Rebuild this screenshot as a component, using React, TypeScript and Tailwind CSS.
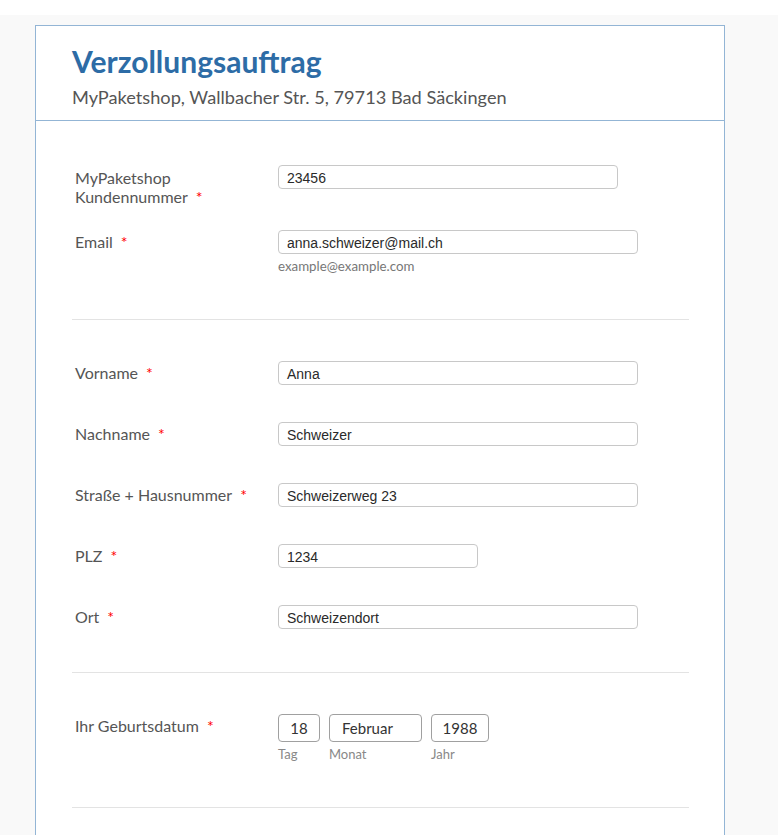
import React from "react";

const labelFont = { fontFamily: "Lato, 'Noto Sans', sans-serif" };
const inputFont = { fontFamily: "'Liberation Sans', Arial, sans-serif" };

function Star() {
  return <span className="ml-[8px] text-[#ff0000]">*</span>;
}

function Field({
  label,
  value,
  width,
  first,
}: {
  label: React.ReactNode;
  value: string;
  width: string;
  first?: boolean;
}) {
  return (
    <div className={`flex ${first ? "" : "mt-[37px]"}`}>
      <div className="w-[206px] pl-[3px] pt-[2px] text-[16px] leading-[19px] text-[#555]">{label}</div>
      <div
        className={`${width} h-[24px] rounded-[4px] border border-[#c8c8c8] bg-white px-[8px] pt-[1px] text-[14px] leading-[22px] text-[#2a2a2a]`}
        style={inputFont}
      >
        {value}
      </div>
    </div>
  );
}

export default function App() {
  return (
    <div className="min-h-screen bg-white" style={labelFont}>
      <div className="h-[15px] bg-white" />
      <div className="bg-[#f9f9f9] pl-[35px] pr-[53px] pt-[10px]">
        <div className="w-[690px] border border-b-0 border-[#93b5d5] bg-white">
          <div className="border-b border-[#93b5d5] px-[36px] pb-[11px] pt-[17px]">
            <h1 className="text-[30px] font-bold leading-[36px] text-[#2d6ca6]">Verzollungsauftrag</h1>
            <p className="mt-[6px] text-[18.2px] leading-[24px] text-[#555]">
              MyPaketshop, Wallbacher Str. 5, 79713 Bad Säckingen
            </p>
          </div>

          <div className="pl-[36px] pr-[35px]">
            <div className="pb-[45px] pt-[44px]">
              <div className="flex">
                <div className="w-[206px] pl-[3px] pt-[3px] text-[16px] leading-[19px] text-[#555]">
                  MyPaketshop
                  <br />
                  Kundennummer
                  <Star />
                </div>
                <div
                  className="h-[24px] w-[340px] rounded-[4px] border border-[#c8c8c8] px-[8px] pt-[1px] text-[14px] leading-[22px] text-[#2a2a2a]"
                  style={inputFont}
                >
                  23456
                </div>
              </div>
              <div className="mt-[24px] flex">
                <div className="w-[206px] pl-[3px] pt-[2px] text-[16px] leading-[19px] text-[#555]">
                  Email
                  <Star />
                </div>
                <div>
                  <div
                    className="h-[24px] w-[360px] rounded-[4px] border border-[#c8c8c8] px-[8px] pt-[1px] text-[14px] leading-[22px] text-[#2a2a2a]"
                    style={inputFont}
                  >
                    anna.schweizer@mail.ch
                  </div>
                  <div className="mt-[4px] text-[13.3px] leading-[16px] text-[#777]">example@example.com</div>
                </div>
              </div>
            </div>

            <div className="border-t border-[#e3e3e3] pb-[43px] pt-[41px]">
              <Field first label={<>Vorname<Star /></>} value="Anna" width="w-[360px]" />
              <Field label={<>Nachname<Star /></>} value="Schweizer" width="w-[360px]" />
              <Field label={<>Straße + Hausnummer<Star /></>} value="Schweizerweg 23" width="w-[360px]" />
              <Field label={<>PLZ<Star /></>} value="1234" width="w-[200px]" />
              <Field label={<>Ort<Star /></>} value="Schweizendort" width="w-[360px]" />
            </div>

            <div className="border-t border-[#e3e3e3] pb-[45px] pt-[41px]">
              <div className="flex">
                <div className="w-[206px] pl-[3px] pt-[2px] text-[16px] leading-[19px] text-[#555]">
                  Ihr Geburtsdatum
                  <Star />
                </div>
                <div className="flex gap-[9px]">
                  <div>
                    <div className="flex h-[28px] w-[42px] items-center justify-center rounded-[4px] border border-[#a0a0a0] text-[15px] text-[#333]">
                      18
                    </div>
                    <div className="mt-[4px] text-[13px] leading-[16px] text-[#888]">Tag</div>
                  </div>
                  <div>
                    <div className="flex h-[28px] w-[93px] items-center rounded-[4px] border border-[#a0a0a0] pl-[12px] text-[15px] text-[#333]">
                      Februar
                    </div>
                    <div className="mt-[4px] text-[13px] leading-[16px] text-[#888]">Monat</div>
                  </div>
                  <div>
                    <div className="flex h-[28px] w-[58px] items-center justify-center rounded-[4px] border border-[#a0a0a0] text-[15px] text-[#333]">
                      1988
                    </div>
                    <div className="mt-[4px] text-[13px] leading-[16px] text-[#888]">Jahr</div>
                  </div>
                </div>
              </div>
            </div>

            <div className="h-[60px] border-t border-[#e3e3e3]" />
          </div>
        </div>
      </div>
    </div>
  );
}
